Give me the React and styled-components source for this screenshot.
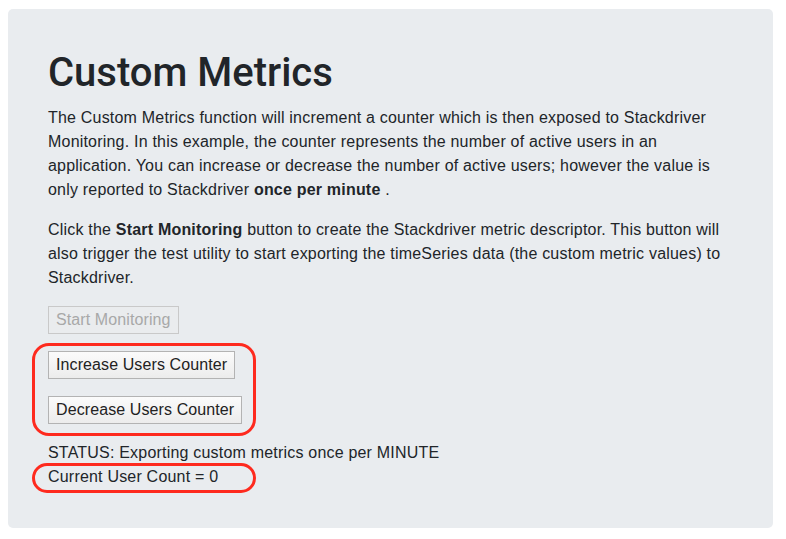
import React from 'react'
import styled, { createGlobalStyle } from 'styled-components'

const GlobalStyle = createGlobalStyle`
  body{
    margin:0;
    background:#fff;
    font-family: "Liberation Sans", Arial, sans-serif;
    color:#212529;
  }
`

const App = () => {
  return (
    <>
      <GlobalStyle />
      <Page>
        <Jumbotron>
          <Title>Custom Metrics</Title>
          <Text>
            The Custom Metrics function will increment a counter which is then exposed to Stackdriver
            Monitoring. In this example, the counter represents the number of active users in an
            application. You can increase or decrease the number of active users; however the value is
            only reported to Stackdriver <b>once per minute</b> .
          </Text>
          <Text>
            Click the <b>Start Monitoring</b> button to create the Stackdriver metric descriptor. This button will
            also trigger the test utility to start exporting the timeSeries data (the custom metric values) to
            Stackdriver.
          </Text>
          <Controls>
            <Button disabled>Start Monitoring</Button>
            <Highlight top='-8px' bottom='-12px' radius='17px'>
              <Stack>
                <Button>Increase Users Counter</Button>
                <Button>Decrease Users Counter</Button>
              </Stack>
            </Highlight>
            <Status>
              <div>STATUS: Exporting custom metrics once per MINUTE</div>
              <Highlight top='-2px' bottom='-4px' radius='15px'>
                <div>Current User Count = 0</div>
              </Highlight>
            </Status>
          </Controls>
        </Jumbotron>
      </Page>
    </>
  )
}

export default App

const Page = styled.div`
  padding:9px 13px 12px 8px;
`

const Jumbotron = styled.div`
  background:#e9ecef;
  border-radius:5px;
  padding:40px 40px 39px 40px;
`

const Title = styled.h1`
  margin:0 0 9px 0;
  font-family: Roboto, "Liberation Sans", sans-serif;
  font-size:40px;
  font-weight:500;
  line-height:48px;
  color:#212529;
`

const Text = styled.p`
  margin:0 0 16px 0;
  font-size:16px;
  line-height:24px;
  letter-spacing:0.2px;
  b{
    font-weight:700;
  }
`

const Controls = styled.div`
  display:flex;
  flex-direction:column;
  align-items:flex-start;
  gap:17px;
`

const Stack = styled.div`
  display:flex;
  flex-direction:column;
  align-items:flex-start;
  gap:17px;
`

const Button = styled.button`
  font-family:inherit;
  font-size:16px;
  letter-spacing:0.1px;
  line-height:22px;
  height:28px;
  padding:0 7px;
  color:#222;
  background:linear-gradient(#fbfbfb, #ececec);
  border:1px solid #b3b3b3;
  border-radius:0;
  &:disabled{
    color:#a8a8a8;
    background:#eaecee;
    border-color:#c9c9c9;
  }
`

const Status = styled.div`
  font-size:16px;
  line-height:24px;
  letter-spacing:0.2px;
  display:flex;
  flex-direction:column;
  align-items:flex-start;
`

const Highlight = styled.div`
  position:relative;
  &::after{
    content:'';
    position:absolute;
    left:-16px;
    width:224px;
    top:${p => p.top};
    bottom:${p => p.bottom};
    box-sizing:border-box;
    border:3.5px solid #fe2a1e;
    border-radius:${p => p.radius};
    pointer-events:none;
  }
`
